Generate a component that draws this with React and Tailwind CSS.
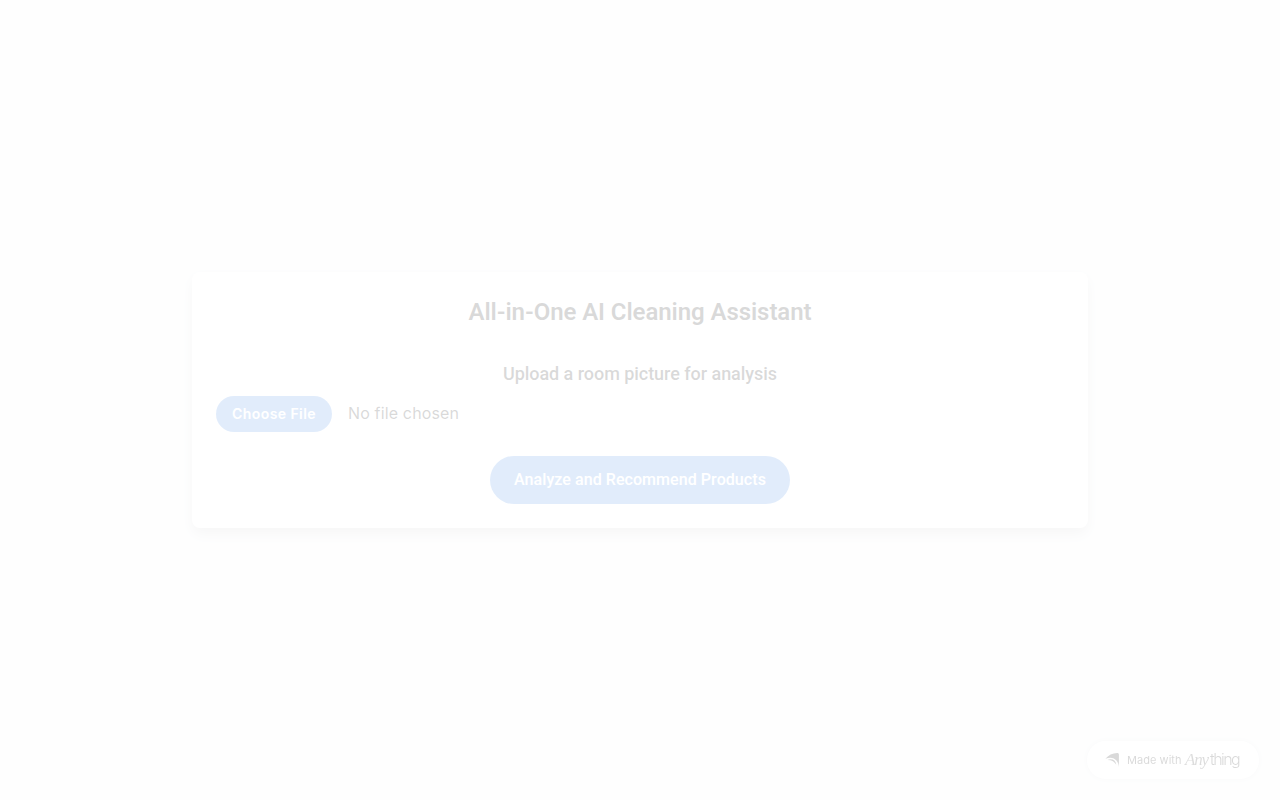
import React, { useState } from 'react';

const MadeWithBadge = () => (
  <a className="fixed bottom-[21px] right-[21px] flex h-[38px] w-[172px] items-center rounded-full bg-white pl-[18px] text-black shadow-[0_0_6px_rgba(0,0,0,0.12)]">
    {/* Wing mark */}
    <svg width="15" height="16" viewBox="0 0 15 16" fill="currentColor" className="shrink-0">
      <path d="M0.4 6.8C3.2 3 7.6 1 12.2 0.9C13.4 0.9 13.9 1.5 13.9 2.5V15.2C13.6 8.8 8.8 3.4 0.4 6.8Z" />
      <path d="M2.4 7.9C7 6.4 10.6 8 11.3 12.8C9.8 9.9 7 7.9 2.4 7.9Z" />
    </svg>
    <span className="ml-[7px] w-[58px] whitespace-nowrap text-[11px] tracking-[0.05px]">Made with</span>
    <span className="flex items-baseline whitespace-nowrap pb-px">
      <span className="w-[25px] font-['Liberation_Serif',serif] text-[17px] italic leading-5 tracking-[-1.2px] text-black/90">Any</span>
      <span className="font-['Inter',sans-serif] text-[16px] font-light leading-5 tracking-[-1.6px]">thing</span>
    </span>
  </a>
);

export default function App() {
  const [file, setFile] = useState(null);

  return (
    <div className="flex min-h-screen items-center justify-center bg-[#f6f7f8] font-['Inter',sans-serif] opacity-15">
      <div className="w-full max-w-4xl rounded-lg bg-white p-6 shadow-[0_10px_15px_-3px_rgba(0,0,0,0.1),0_4px_12px_0_rgba(0,0,0,0.12)]">
        <h1 className="mb-8 text-center font-['Roboto',sans-serif] text-2xl font-semibold tracking-[-0.08px] text-black">
          All-in-One AI Cleaning Assistant
        </h1>

        {/* Room picture upload */}
        <div className="mb-6">
          <h2 className="mb-2 text-center font-['Roboto',sans-serif] text-lg font-medium tracking-[-0.045px] text-black">
            Upload a room picture for analysis
          </h2>
          <input
            type="file"
            accept="image/*"
            onChange={(e) => setFile(e.target.files[0])}
            className="block w-full tracking-[0.15px] text-black file:mr-4 file:rounded-full file:border-0 file:bg-[#3982e3] file:px-4 file:py-2 file:text-sm file:font-semibold file:tracking-[0.43px] file:text-white"
          />
        </div>

        <div className="flex justify-center">
          <button
            disabled={!file}
            className="rounded-full bg-[#3982e3] px-6 py-3 font-['Roboto',sans-serif] font-medium tracking-[0.067px] text-white"
          >
            Analyze and Recommend Products
          </button>
        </div>
      </div>

      <MadeWithBadge />
    </div>
  );
}
